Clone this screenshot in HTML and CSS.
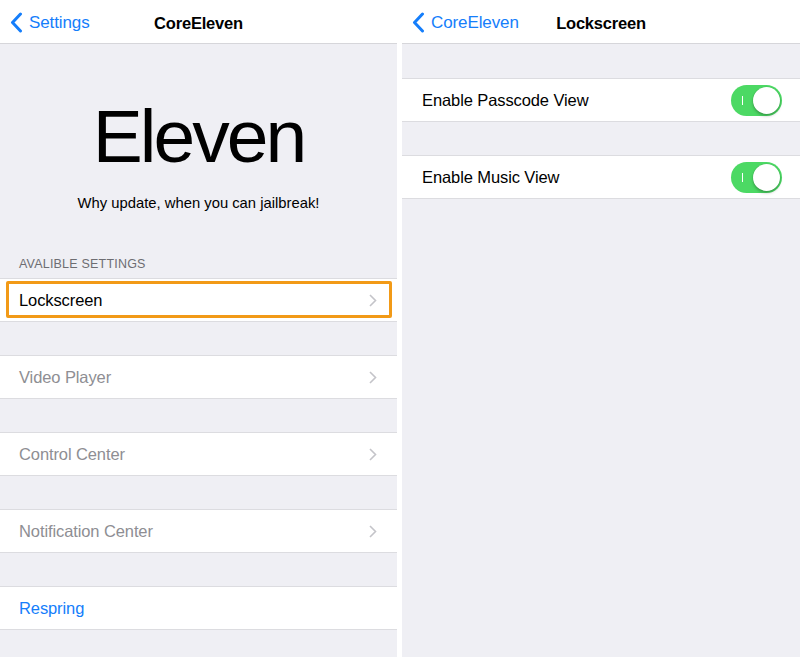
FILE: index.html
```html
<!DOCTYPE html>
<html lang="en">
<head>
<meta charset="utf-8">
<title>CoreEleven</title>
<link rel="stylesheet" href="styles.css">
</head>
<body>
<div class="screen">
  <section class="panel panel-left">
    <header class="nav">
      <a class="back">
        <svg class="back-chevron" width="13" height="21" viewBox="0 0 13 21"><path d="M10.5 2 L2.5 10.5 L10.5 19" fill="none" stroke="#157efb" stroke-width="3" stroke-linecap="round" stroke-linejoin="round"/></svg>
        <span>Settings</span>
      </a>
      <h1 class="nav-title">CoreEleven</h1>
    </header>
    <div class="content">
      <div class="hero">
        <div class="logo">Eleven</div>
        <p class="tagline">Why update, when you can jailbreak!</p>
      </div>
      <div class="section-header">AVALIBLE SETTINGS</div>
      <div class="group">
        <div class="cell">
          <span class="cell-label">Lockscreen</span>
          <svg class="disclosure" width="8" height="13" viewBox="0 0 8 13"><path d="M1 1 L6.5 6.5 L1 12" fill="none" stroke="#c4c4c9" stroke-width="1.6"/></svg>
          <div class="highlight"></div>
        </div>
      </div>
      <div class="group">
        <div class="cell">
          <span class="cell-label muted">Video Player</span>
          <svg class="disclosure" width="8" height="13" viewBox="0 0 8 13"><path d="M1 1 L6.5 6.5 L1 12" fill="none" stroke="#c4c4c9" stroke-width="1.6"/></svg>
        </div>
      </div>
      <div class="group">
        <div class="cell">
          <span class="cell-label muted">Control Center</span>
          <svg class="disclosure" width="8" height="13" viewBox="0 0 8 13"><path d="M1 1 L6.5 6.5 L1 12" fill="none" stroke="#c4c4c9" stroke-width="1.6"/></svg>
        </div>
      </div>
      <div class="group">
        <div class="cell">
          <span class="cell-label muted">Notification Center</span>
          <svg class="disclosure" width="8" height="13" viewBox="0 0 8 13"><path d="M1 1 L6.5 6.5 L1 12" fill="none" stroke="#c4c4c9" stroke-width="1.6"/></svg>
        </div>
      </div>
      <div class="group">
        <div class="cell">
          <span class="cell-label link">Respring</span>
        </div>
      </div>
    </div>
  </section>

  <div class="divider"></div>

  <section class="panel panel-right">
    <header class="nav">
      <a class="back">
        <svg class="back-chevron" width="13" height="21" viewBox="0 0 13 21"><path d="M10.5 2 L2.5 10.5 L10.5 19" fill="none" stroke="#157efb" stroke-width="3" stroke-linecap="round" stroke-linejoin="round"/></svg>
        <span>CoreEleven</span>
      </a>
      <h1 class="nav-title">Lockscreen</h1>
    </header>
    <div class="content content-right">
      <div class="group">
        <div class="cell">
          <span class="cell-label">Enable Passcode View</span>
          <div class="switch"><span class="switch-mark"></span><span class="knob"></span></div>
        </div>
      </div>
      <div class="group">
        <div class="cell">
          <span class="cell-label">Enable Music View</span>
          <div class="switch"><span class="switch-mark"></span><span class="knob"></span></div>
        </div>
      </div>
    </div>
  </section>
</div>
</body>
</html>
```

FILE: styles.css
```css
* { box-sizing: border-box; }

html, body {
  margin: 0;
  padding: 0;
  width: 800px;
  height: 657px;
  overflow: hidden;
  background: #ffffff;
  font-family: "Liberation Sans", Arial, sans-serif;
  -webkit-font-smoothing: antialiased;
}

.screen {
  display: flex;
  width: 800px;
  height: 657px;
}

.panel {
  display: flex;
  flex-direction: column;
  height: 657px;
  background: #efeff4;
}

.panel-left { width: 397px; }
.panel-right { width: 398px; }

.divider {
  width: 5px;
  background: #ffffff;
}

.nav {
  position: relative;
  height: 44px;
  flex: 0 0 44px;
  background: #ffffff;
  border-bottom: 1px solid #d6d6da;
  display: flex;
  align-items: center;
  justify-content: center;
  padding-top: 3px;
}

.back {
  position: absolute;
  left: 10px;
  top: 3px;
  height: 40px;
  display: flex;
  align-items: center;
  gap: 6px;
  color: #157efb;
  font-size: 17px;
  letter-spacing: -0.1px;
}

.back-chevron { display: block; margin-top: -1px; }

.nav-title {
  margin: 0;
  font-size: 16.5px;
  font-weight: 700;
  color: #000000;
  letter-spacing: -0.2px;
}

.content {
  flex: 1;
  display: flex;
  flex-direction: column;
}

.hero {
  display: flex;
  flex-direction: column;
  align-items: center;
  padding-top: 55px;
}

.logo {
  font-size: 75px;
  line-height: 75px;
  letter-spacing: -3px;
  color: #000000;
}

.tagline {
  margin: 20px 0 0;
  font-size: 14.8px;
  line-height: 18px;
  color: #000000;
}

.section-header {
  margin-top: 44px;
  padding: 0 19px 6px;
  font-size: 12.5px;
  line-height: 16px;
  color: #6d6d72;
  letter-spacing: 0.2px;
}

.group {
  background: #ffffff;
  border-top: 1px solid #dcdce0;
  border-bottom: 1px solid #dcdce0;
  margin-bottom: 33px;
}

.content-right { padding-top: 34px; }

.cell {
  position: relative;
  height: 42px;
  display: flex;
  align-items: center;
  justify-content: space-between;
  padding: 0 20px 0 19px;
}

.panel-right .cell { padding: 0 18px 0 20px; }

.cell-label {
  font-size: 16.5px;
  color: #000000;
  letter-spacing: -0.1px;
}

.cell-label.muted { color: #8e8e93; }
.cell-label.link { color: #157efb; }

.disclosure { display: block; }

.highlight {
  position: absolute;
  left: 6px;
  right: 5px;
  top: 2px;
  bottom: 3px;
  border: 3px solid #f29a17;
  border-radius: 2px;
}

.switch {
  position: relative;
  width: 51px;
  height: 31px;
  border-radius: 16px;
  background: #4cd964;
}

.switch-mark {
  position: absolute;
  left: 11px;
  top: 11px;
  width: 1px;
  height: 9px;
  background: #ffffff;
}

.knob {
  position: absolute;
  right: 2px;
  top: 2px;
  width: 27px;
  height: 27px;
  border-radius: 50%;
  background: #ffffff;
  box-shadow: 0 2px 3px rgba(0, 0, 0, 0.25), 0 0 0 0.5px rgba(0, 0, 0, 0.08);
}
```
